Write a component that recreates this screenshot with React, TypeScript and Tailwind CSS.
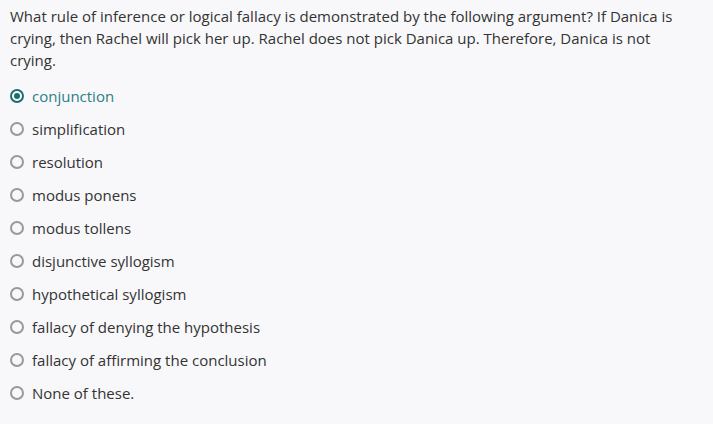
import React from "react";

const options = [
  "conjunction",
  "simplification",
  "resolution",
  "modus ponens",
  "modus tollens",
  "disjunctive syllogism",
  "hypothetical syllogism",
  "fallacy of denying the hypothesis",
  "fallacy of affirming the conclusion",
  "None of these.",
];

export default function App() {
  return (
    <div className="min-h-[424px] w-[713px] bg-[#f8f8fa] px-[10px] pt-[5px] font-['Open_Sans',sans-serif] text-[15px] text-[#333]">
      <p className="leading-[22px] w-[680px]">
        What rule of inference or logical fallacy is demonstrated by the following argument? If Danica is crying, then Rachel will pick her up. Rachel does not pick Danica up. Therefore, Danica is not crying.
      </p>
      <div className="mt-[14px] flex flex-col gap-[11px]">
        {options.map((o, i) => (
          <div key={o} className="flex items-center h-[22px]">
            {i === 0 ? (
              <span className="w-[14px] h-[14px] rounded-full border-2 border-[#1d6e70] flex items-center justify-center">
                <span className="w-[6px] h-[6px] rounded-full bg-[#1d6e70]" />
              </span>
            ) : (
              <span className="w-[14px] h-[14px] rounded-full border-2 border-[#999]" />
            )}
            <span className={`ml-[8px] ${i === 0 ? "text-[#2b7f84]" : ""}`}>{o}</span>
          </div>
        ))}
      </div>
    </div>
  );
}
